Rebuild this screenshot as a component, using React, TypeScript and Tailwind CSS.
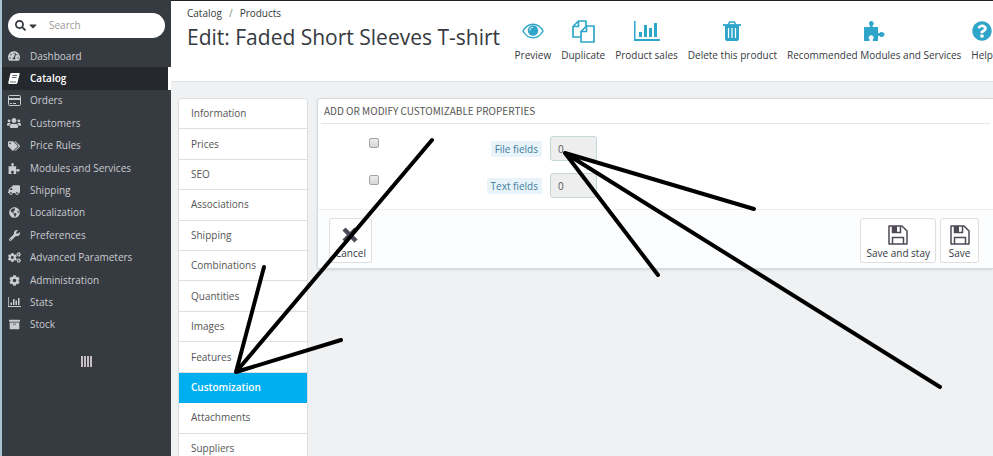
import React from 'react';
import clsx from 'clsx';
import {
  FaArchive,
  FaCaretDown,
  FaCog,
  FaCogs,
  FaGlobeAmericas,
  FaQuestionCircle,
  FaSearch,
  FaTachometerAlt,
  FaTags,
  FaTruck,
  FaUsers,
  FaWrench,
} from 'react-icons/fa';

type IconProps = { className?: string };

const BookIcon = ({ className }: IconProps) => (
  <svg viewBox="0 0 12 11" className={className}>
    <path d="M3.500 0H11q1 0 .7 1L9.500 9.500Q9.200 11 8 11H1.500Q0 11 .3 9.500L2.300 1Q2.500 0 3.500 0z" fill="currentColor" />
    <path d="M4.500 2.500h4.500M4 4.500h4.500M2 9h6" stroke="#25282d" strokeWidth="0.700" />
  </svg>
);

const CardIcon = ({ className }: IconProps) => (
  <svg viewBox="0 0 13 11" className={className} fill="none" stroke="currentColor">
    <rect x="0.5" y="0.5" width="12" height="10" rx="1" />
    <path d="M1 4h11" strokeWidth="2" />
    <path d="M2 8.5h2M5 8.5h3" />
  </svg>
);

const PuzzleIcon = ({ className }: IconProps) => (
  <svg viewBox="0 0 22 20" className={className} fill="currentColor">
    <path d="M1 6h5.4c.8 0 1-.6.6-1.3C6.600 4 6 3.600 6 2.600 6 1.100 7 0 8.300 0s2.400 1.100 2.400 2.600c0 1-.6 1.400-1 2.100-.4.700-.1 1.300.7 1.300H15v5.200c0 .9.600 1.200 1.300.8.700-.4 1.200-1 2.300-1 1.500 0 2.900.9 2.900 2.400s-1.400 2.500-2.900 2.500c-1.100 0-1.600-.6-2.300-1-.7-.4-1.300-.1-1.300.8V20h-4.600c-.8 0-1.100-.5-.7-1.200.4-.7 1-1.200 1-2.200 0-1.400-1.100-2.400-2.500-2.400s-2.500 1-2.500 2.400c0 1 .6 1.500 1 2.200.4.700.1 1.200-.7 1.200H1z" />
  </svg>
);

const ChartIcon = ({ className }: IconProps) => (
  <svg viewBox="0 0 26 20" className={className} fill="currentColor">
    <path d="M0 0h1.500v18H26v2H0zM5 11h3v5H5zM10 4h3v12h-3zM15 7h3v9h-3zM20 2h3v14h-3z" />
  </svg>
);

const EyeIcon = ({ className }: IconProps) => (
  <svg viewBox="0 0 22 16" className={className}>
    <path
      d="M1 8C3.500 3.500 7 1.200 11 1.200S18.500 3.500 21 8c-2.500 4.500-6 6.800-10 6.800S3.500 12.500 1 8z"
      fill="none"
      stroke="currentColor"
      strokeWidth="1.5"
    />
    <circle cx="11" cy="7.5" r="5.200" fill="currentColor" />
    <path d="M7.800 7.200c0-1.800 1.300-3 3-3" fill="none" stroke="#fff" strokeLinecap="round" />
  </svg>
);

const CopyIcon = ({ className }: IconProps) => (
  <svg viewBox="0 0 23 23" className={className} fill="none" stroke="currentColor" strokeWidth="1.700" strokeLinejoin="round">
    <path d="M8.500 17H1V6.500L6.500 1H14v5.500" />
    <path d="M6.500 1v5.500H1" />
    <path d="M14.500 6H22v16H9V11.500z" />
    <path d="M14.500 6v5.500H9" />
  </svg>
);

const TrashIcon = ({ className }: IconProps) => (
  <svg viewBox="0 0 18 20" className={className} fill="none" stroke="currentColor">
    <path d="M0 4h18" strokeWidth="1.800" />
    <path d="M5.500 3.500L6.500 1h5l1 2.500" strokeWidth="1.500" />
    <path d="M2 4h14v13.500q0 2.500-2 2.500H4q-2 0-2-2.500z" fill="currentColor" stroke="none" />
    <path d="M5.500 7v10M9 7v10M12.500 7v10" stroke="#fff" strokeWidth="1.200" />
  </svg>
);

const FloppyIcon = ({ className }: IconProps) => (
  <svg viewBox="0 0 20 20" className={className} fill="none" stroke="currentColor" strokeWidth="1.500">
    <path d="M1 1h13l5 5v13H1z" strokeLinejoin="round" />
    <path d="M4.500 1v6.500h8V1M4.500 19v-6.500h11V19" />
    <path d="M5 1h4v6H5z" fill="currentColor" stroke="none" />
  </svg>
);

const CrossIcon = ({ className }: IconProps) => (
  <svg viewBox="0 0 16 16" className={className} fill="none" stroke="currentColor" strokeWidth="4.500">
    <path d="M2 2l12 12M14 2L2 14" />
  </svg>
);

const menu = [
  { label: 'Dashboard', icon: <FaTachometerAlt className="size-3" /> },
  { label: 'Catalog', icon: <BookIcon className="h-[11px] w-3" />, active: true },
  { label: 'Orders', icon: <CardIcon className="h-[11px] w-[13px]" /> },
  { label: 'Customers', icon: <FaUsers className="size-[14px]" /> },
  { label: 'Price Rules', icon: <FaTags className="size-3" /> },
  { label: 'Modules and Services', icon: <PuzzleIcon className="h-[11px] w-3" /> },
  { label: 'Shipping', icon: <FaTruck className="size-3 -scale-x-100" /> },
  { label: 'Localization', icon: <FaGlobeAmericas className="size-[11px]" /> },
  { label: 'Preferences', icon: <FaWrench className="size-[11px]" /> },
  { label: 'Advanced Parameters', icon: <FaCogs className="size-[13px]" /> },
  { label: 'Administration', icon: <FaCog className="size-[11px]" /> },
  { label: 'Stats', icon: <ChartIcon className="h-[10px] w-[13px]" /> },
  { label: 'Stock', icon: <FaArchive className="size-[11px]" /> },
];

const tools = [
  { label: 'Preview', icon: <EyeIcon className="h-4 w-[22px]" /> },
  { label: 'Duplicate', icon: <CopyIcon className="size-[23px]" /> },
  { label: 'Product sales', icon: <ChartIcon className="h-5 w-[26px]" /> },
  { label: 'Delete this product', icon: <TrashIcon className="h-5 w-[18px]" /> },
  { label: 'Recommended Modules and Services', icon: <PuzzleIcon className="h-5 w-[22px]" /> },
  { label: 'Help', icon: <FaQuestionCircle className="size-5" /> },
];

const tabs = [
  'Information',
  'Prices',
  'SEO',
  'Associations',
  'Shipping',
  'Combinations',
  'Quantities',
  'Images',
  'Features',
  'Customization',
  'Attachments',
  'Suppliers',
];

const Sidebar = () => (
  <aside className="w-[171px] shrink-0 border-l-2 border-[#a9c3d3] bg-[#363a41] pt-[13px]">
    <div className="mr-[6px] ml-[6px] flex h-[25px] items-center rounded-full bg-white px-[7px] text-[#363a41]">
      <button type="button" aria-label="Search scope" className="flex items-center gap-px">
        <FaSearch className="size-[11px]" />
        <FaCaretDown className="size-3" />
      </button>
      <input
        type="search"
        aria-label="Search"
        placeholder="Search"
        className="ml-[10px] w-0 flex-1 bg-transparent outline-none placeholder:text-[#999]"
      />
    </div>
    <nav className="mt-[7px] grid h-[291px] auto-rows-fr text-[#c9ccd0]">
      {menu.map((item) => (
        <a
          key={item.label}
          href="#"
          className={clsx(
            'flex items-center gap-[9px] pl-[5px]',
            item.active && 'border-r-[3px] border-white bg-[#25282d] font-semibold text-white',
          )}
        >
          <span className="flex w-[14px] justify-center">{item.icon}</span>
          {item.label}
        </a>
      ))}
    </nav>
    <button type="button" aria-label="Collapse menu" className="mx-auto mt-[20px] flex h-[11px] gap-px">
      {[0, 1, 2, 3].map((bar) => (
        <span key={bar} className="w-[2px] bg-[#c5bcc8]" />
      ))}
    </button>
  </aside>
);

const Header = () => (
  <header className="flex h-[81px] items-start justify-between border-b border-[#dfe1e3] bg-white pl-4 text-[#363a41]">
    <div className="shrink-0 pt-[4px]">
      <nav aria-label="Breadcrumb" className="flex h-4 items-center">
        <a href="#">Catalog</a>
        <span className="px-[7px] text-[#7a8a7a]">/</span>
        <a href="#">Products</a>
      </nav>
      <h1 className="text-[21px] leading-8">Edit: Faded Short Sleeves T-shirt</h1>
    </div>
    <div className="flex shrink-0 gap-[10px] pt-[18px]">
      {tools.map((tool) => (
        <button key={tool.label} type="button" className="flex flex-col items-center whitespace-nowrap">
          <span className="flex h-6 items-center text-[#2fa5c9]">{tool.icon}</span>
          <span className="mt-1 leading-4">{tool.label}</span>
        </button>
      ))}
    </div>
  </header>
);

const Field = ({ id, label }: { id: string; label: string }) => (
  <div className="flex h-[25px]">
    <div className="w-[181px] shrink-0 pt-[2px] pl-[51px]">
      <input
        type="checkbox"
        aria-label={`Select ${label}`}
        className="block size-[10px] appearance-none rounded-[2px] border border-[#a3a3a3] bg-gradient-to-b from-[#ededed] to-[#d6d6d6]"
      />
    </div>
    <div className="flex w-[43px] shrink-0 items-center justify-end">
      <label htmlFor={id} className="rounded-[2px] bg-[#e8f4fa] px-1 leading-4 whitespace-nowrap text-[#3f7c9c]">
        {label}
      </label>
    </div>
    <input
      id={id}
      type="text"
      defaultValue="0"
      className="ml-2 h-[25px] w-[47px] rounded-[3px] border border-[#c7d6db] bg-[#eeeeee] px-[7px] text-[#555] outline-none"
    />
  </div>
);

const PanelButton = ({ icon, children }: { icon: React.ReactNode; children: React.ReactNode }) => (
  <button
    type="button"
    className="flex h-[45px] min-w-[39px] flex-col items-center rounded-[3px] border border-[#dedede] bg-white px-[5px] pt-[6px] whitespace-nowrap"
  >
    <span className="flex h-5 items-center text-[#4f4a57]">{icon}</span>
    <span className="leading-4">{children}</span>
  </button>
);

const CustomizationPanel = () => (
  <section className="min-w-0 flex-1 rounded-l-[4px] border border-r-0 border-[#d8dbdd] bg-white shadow-sm">
    <h2 className="mx-[3px] h-[25px] border-b border-[#e6e6e6] pl-[3px] font-['Noto_Sans_CJK_SC',sans-serif] text-[10px] leading-6 text-[#555] uppercase">
      Add or modify customizable properties
    </h2>
    <form>
      <div className="flex flex-col gap-3 pt-3 pb-[11px]">
        <Field id="file-fields" label="File fields" />
        <Field id="text-fields" label="Text fields" />
      </div>
      <div className="flex items-start gap-1 border-t border-[#eee] bg-[#fcfdfe] pt-2 pr-[14px] pb-[5px] pl-[11px] text-[#363a41]">
        <PanelButton icon={<CrossIcon className="size-4" />}>Cancel</PanelButton>
        <div className="flex-1" />
        <PanelButton icon={<FloppyIcon className="size-5" />}>Save and stay</PanelButton>
        <PanelButton icon={<FloppyIcon className="size-5" />}>Save</PanelButton>
      </div>
    </form>
  </section>
);

// Hand-drawn arrows pointing at the tab and the field
const Arrows = () => (
  <svg
    width="993"
    height="456"
    className="pointer-events-none absolute top-0 left-0"
    fill="none"
    stroke="#000"
    strokeWidth="4"
    strokeLinecap="round"
    aria-hidden="true"
  >
    <path d="M432 140L236 372M264 267L236 372M341 340L236 372" />
    <path d="M940 387L565 153M754 209L565 153M658 275L565 153" />
  </svg>
);

export default function App() {
  return (
    <div className="relative flex h-screen overflow-hidden bg-[#eff1f2] font-['Open_Sans',sans-serif] text-[10px]">
      <Sidebar />
      <main className="min-w-0 flex-1 border-t border-[#222]">
        <Header />
        <div className="flex items-start gap-[9px] pt-4 pl-[7px]">
          <nav className="grid h-[367px] w-[130px] shrink-0 auto-rows-fr rounded-[4px] border border-[#dcdee0] bg-white text-[#555]">
            {tabs.map((tab) => (
              <a
                key={tab}
                href="#"
                className={clsx(
                  'flex items-center border-b pl-3',
                  tab === 'Customization'
                    ? 'border-[#00aff0] bg-[#00aff0] font-semibold text-white'
                    : 'border-[#dcdee0]',
                )}
              >
                {tab}
              </a>
            ))}
          </nav>
          <CustomizationPanel />
        </div>
      </main>
      <Arrows />
    </div>
  );
}
